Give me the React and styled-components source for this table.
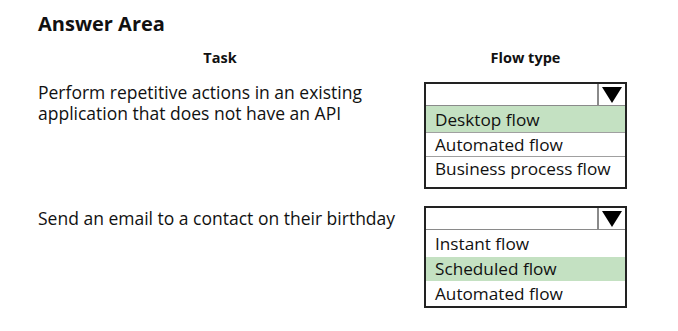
import React from 'react';
import styled, { createGlobalStyle } from 'styled-components';

const Global = createGlobalStyle`
    body {
        margin: 0;
        background: #fff;
        font-family: "Open Sans", "Noto Sans", sans-serif;
        color: #111;
    }
`;

const Page = styled.div`
    width: 678px;
    height: 331px;
    padding: 11px 0 0 38px;
    box-sizing: border-box;
`;

const Title = styled.h1`
    margin: 0 0 11px 0;
    font-size: 20px;
    font-weight: 700;
    line-height: 26px;
`;

const Grid = styled.div`
    display: grid;
    grid-template-columns: 364px 22px 203px;
`;

const Head = styled.div`
    grid-column: ${p => p.col};
    text-align: center;
    font-size: 14.5px;
    font-weight: 700;
    line-height: 20px;
    margin-bottom: 14px;
`;

const TaskText = styled.div`
    grid-column: 1;
    font-size: 17.5px;
    line-height: 21px;
    padding-top: ${p => p.top || 0}px;
`;

const Box = styled.div`
    grid-column: 3;
    border: 2px solid #222;
    height: ${p => p.h}px;
    box-sizing: border-box;
    margin-top: ${p => p.mt || 0}px;
    display: flex;
    flex-direction: column;
`;

const Header = styled.div`
    display: flex;
    height: 21px;
    border-bottom: 1px solid #8a8a8a;
    flex-shrink: 0;
`;

const Arrow = styled.div`
    margin-left: auto;
    width: 26px;
    border-left: 2px solid #8a8a8a;
    display: flex;
    align-items: center;
    justify-content: center;
`;

const Item = styled.div`
    height: ${p => p.h || 24}px;
    line-height: ${p => p.h || 24}px;
    padding-left: 9px;
    font-size: 17.2px;
    background: ${p => (p.on ? '#c4e1c2' : 'transparent')};
    border-bottom: ${p => (p.line ? '1px solid #a0a0a0' : 'none')};
    box-sizing: border-box;
    white-space: nowrap;
`;

const Tri = () => (
    <svg width="20" height="16" viewBox="0 0 20 16">
        <polygon points="0,0 20,0 10,16" fill="#000" />
    </svg>
);

const Dropdown = ({ items, h, mt, lines }) => (
    <Box h={h} mt={mt}>
        <Header>
            <Arrow><Tri /></Arrow>
        </Header>
        {items.map((it, i) => (
            <Item key={i} on={it.on} line={lines && i < items.length - 1} h={it.h}>
                {it.label}
            </Item>
        ))}
    </Box>
);

const App = () => {
    return (
        <Page>
            <Global />
            <Title>Answer Area</Title>
            <Grid>
                <Head col={1}>Task</Head>
                <Head col={3}>Flow type</Head>

                <TaskText>
                    Perform repetitive actions in an existing<br />
                    application that does not have an API
                </TaskText>
                <Dropdown
                    h={107}
                    lines
                    items={[
                        { label: 'Desktop flow', on: true, h: 27 },
                        { label: 'Automated flow', h: 24 },
                        { label: 'Business process flow', h: 24 },
                    ]}
                />

                <TaskText top={19}>Send an email to a contact on their birthday</TaskText>
                <Dropdown
                    h={102}
                    mt={17}
                    items={[
                        { label: 'Instant flow', h: 27 },
                        { label: 'Scheduled flow', on: true, h: 24 },
                        { label: 'Automated flow', h: 25 },
                    ]}
                />
            </Grid>
        </Page>
    );
};

export default App;
